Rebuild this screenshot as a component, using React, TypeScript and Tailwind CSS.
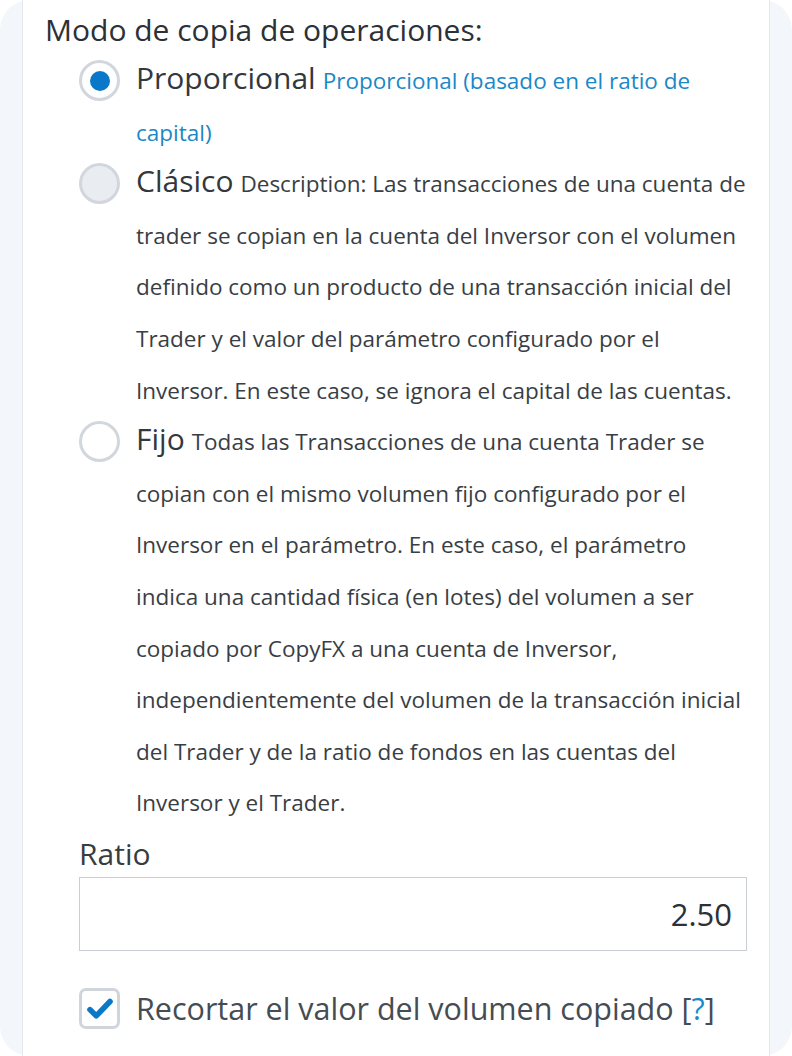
import React from 'react';

const font = { fontFamily: '"Open Sans", "Noto Sans", sans-serif' };

const options = [
  {
    id: 'prop',
    label: 'Proporcional',
    desc: 'Proporcional (basado en el ratio de capital)',
    blue: true,
    checked: true,
  },
  {
    id: 'clas',
    label: 'Clásico',
    desc: 'Description: Las transacciones de una cuenta de trader se copian en la cuenta del Inversor con el volumen definido como un producto de una transacción inicial del Trader y el valor del parámetro configurado por el Inversor. En este caso, se ignora el capital de las cuentas.',
    grey: true,
  },
  {
    id: 'fijo',
    label: 'Fijo',
    desc: 'Todas las Transacciones de una cuenta Trader se copian con el mismo volumen fijo configurado por el Inversor en el parámetro. En este caso, el parámetro indica una cantidad física (en lotes) del volumen a ser copiado por CopyFX a una cuenta de Inversor, independientemente del volumen de la transacción inicial del Trader y de la ratio de fondos en las cuentas del Inversor y el Trader.',
  },
];

const Radio: React.FC<{ checked?: boolean; grey?: boolean }> = ({ checked, grey }) => (
  <span
    className={`mt-[5px] flex h-[41px] w-[41px] shrink-0 items-center justify-center rounded-full border-[3px] border-[#d2d6dd] ${
      grey ? 'bg-[#e9ecf0]' : 'bg-white'
    }`}
  >
    {checked && <span className="h-[20px] w-[20px] rounded-full bg-[#0a78c8]" />}
  </span>
);

export default function App() {
  return (
    <div className="min-h-screen bg-white" style={font}>
      <div className="h-[1056px] rounded-[30px] bg-[#f3f7fb] px-[22px]">
        <div className="h-full border-x border-[#e3e8ee] bg-white pl-[22px] pr-[22px] pt-[10px]">
          <h2 className="text-[30px] leading-[40px] text-[#2b3136]">Modo de copia de operaciones:</h2>

          <div className="mt-[5px] pl-[34px]">
            {options.map(o => (
              <div key={o.id} className="flex gap-[16px]">
                <Radio checked={o.checked} grey={o.grey} />
                <p className="text-[22.5px] leading-[51.6px] text-[#383e44]">
                  <span className="mr-[7px] text-[30px] leading-[30px] text-[#32383e]">{o.label}</span>
                  <span className={o.blue ? 'text-[#1a88c6]' : ''}>{o.desc}</span>
                </p>
              </div>
            ))}

            <label className="mt-[5px] block text-[30px] leading-[40px] text-[#363c42]">Ratio</label>
            <div className="mt-[3px] flex h-[74px] items-center justify-end border border-[#c9ced4] px-[14px] text-[31px] text-[#2b3136]">
              2.50
            </div>

            <div className="mt-[35px] flex items-center gap-[16px]">
              <span className="flex h-[41px] w-[41px] shrink-0 items-center justify-center rounded-[7px] border-[3px] border-[#d0d5dc] bg-white">
                <svg viewBox="0 0 24 24" className="h-[30px] w-[30px]" fill="none" stroke="#0a78c8" strokeWidth="4.5" strokeLinecap="round" strokeLinejoin="round">
                  <path d="M4 12.5l5 5L20 6" />
                </svg>
              </span>
              <span className="text-[30.5px] text-[#454c53]">
                Recortar el valor del volumen copiado [<span className="text-[#1a88c6]">?</span>]
              </span>
            </div>
          </div>
        </div>
      </div>
    </div>
  );
}
